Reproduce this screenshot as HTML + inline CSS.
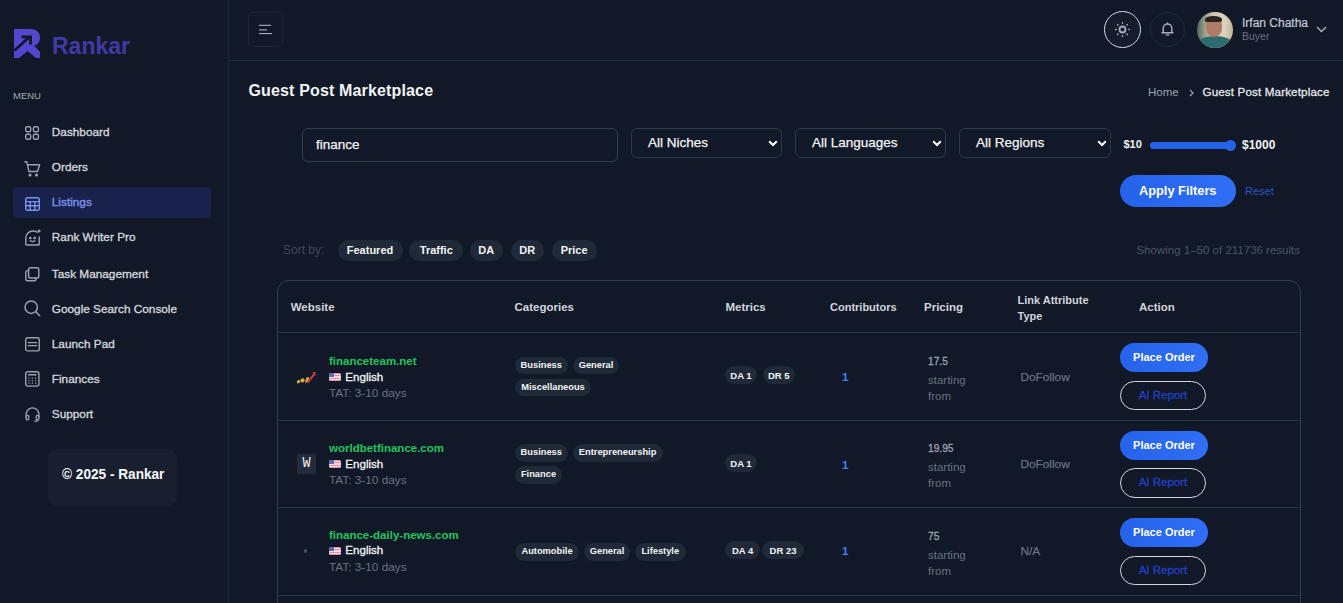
<!DOCTYPE html>
<html><head><meta charset="utf-8">
<style>
*{box-sizing:border-box;margin:0;padding:0}
html,body{width:1343px;height:603px;overflow:hidden;background:#111827;font-family:"Liberation Sans",sans-serif;color:#e5e7eb}
.a{position:absolute;line-height:1;white-space:nowrap}
.b{font-weight:bold}
svg{position:absolute;overflow:visible}
.ln{position:absolute;background:#1f2937}
/* sidebar */
.mt{position:absolute;left:51.8px;font-size:11.8px;font-weight:normal;-webkit-text-stroke:0.35px currentColor;color:#d1d5db;line-height:1;white-space:nowrap}
.ic{fill:none;stroke:#9ca3af;stroke-width:1.4;stroke-linecap:round;stroke-linejoin:round}
.box{position:absolute;border:1px solid #374151;border-radius:6px}
.sel{position:absolute;border:1px solid #2f3847;border-radius:6px;height:30px;top:128px}
.chip{position:absolute;background:#1f2937;border-radius:11px;height:21px;top:239.5px}
.chip span{position:absolute;left:0;right:0;text-align:center;top:5.5px;font-size:11px;font-weight:bold;color:#f3f4f6;line-height:1}
.th{position:absolute;font-size:11.5px;font-weight:bold;color:#d1d5db;line-height:1;white-space:nowrap}
.cat{position:absolute;background:#1f2937;border-radius:9px;height:17.5px}
.cat span{position:absolute;left:0;right:0;text-align:center;top:4.3px;font-size:9.3px;font-weight:bold;color:#f3f4f6;line-height:1;white-space:nowrap}
.met{position:absolute;background:#1f2937;border-radius:9px;height:18px}
.met span{position:absolute;left:0;right:0;text-align:center;top:4.5px;font-size:9.5px;font-weight:bold;color:#f3f4f6;line-height:1;white-space:nowrap}
.dom{position:absolute;left:329px;font-size:11.5px;font-weight:bold;color:#22c55e;line-height:1;white-space:nowrap}
.eng{position:absolute;left:345.3px;font-size:11.6px;-webkit-text-stroke:0.3px currentColor;color:#f3f4f6;line-height:1}
.tat{position:absolute;left:329px;font-size:11.8px;color:#6b7280;line-height:1;white-space:nowrap}
.flag{position:absolute;left:329px;width:12px;height:8px;border-radius:1.5px;overflow:hidden;background:repeating-linear-gradient(#e58fa3 0 1.15px,#f1dde3 1.15px 2.3px)}
.flag:before{content:"";position:absolute;left:0;top:0;width:5px;height:4px;background:#5a6cb0}
.ctr{position:absolute;left:842px;font-size:11.5px;font-weight:bold;color:#3b82f6;line-height:1}
.pr{position:absolute;left:928px;font-size:10.2px;-webkit-text-stroke:0.3px currentColor;color:#9ca3af;line-height:1}
.sf{position:absolute;left:928px;font-size:11.5px;color:#6b7280;line-height:1}
.lk{position:absolute;left:1020.5px;font-size:11.8px;-webkit-text-stroke:0.25px currentColor;color:#6b7280;line-height:1}
.po{position:absolute;left:1120px;width:88px;height:29px;border-radius:15px;background:linear-gradient(90deg,#2563eb,#2f6ef5)}
.po span{position:absolute;left:0;right:0;top:9px;text-align:center;font-size:11px;font-weight:bold;color:#fff;line-height:1}
.ai{position:absolute;left:1120px;width:86px;height:29.5px;border-radius:15px;border:1.7px solid #d3d8df}
.ai span{position:absolute;left:0;right:0;top:8px;text-align:center;font-size:11.5px;-webkit-text-stroke:0.3px currentColor;color:#2541c6;line-height:1}
</style></head><body>

<!-- SIDEBAR -->
<div class="ln" style="left:228px;top:0;width:1px;height:603px"></div>
<svg style="left:14px;top:29px" width="27" height="30" viewBox="0 0 27 30">
  <path d="M0 0 H17 C22.5 0 26 3.6 26 8.5 C26 13 23.5 16 20 16.8 L26 22.8 V29 H22 L13.5 22 L5 29 H0 V0 Z" fill="#5646cf"/>
  <path d="M0.5 21.5 L14.5 8.8 M7.5 7.8 H16.6 V15.5" stroke="#111827" stroke-width="2.8" fill="none" stroke-linejoin="miter"/>
</svg>
<div class="a b" style="left:52px;top:34.5px;font-size:23px;color:#4338a6">Rankar</div>
<div class="a" style="left:13px;top:91px;font-size:9.5px;color:#a3aab5">MENU</div>

<div style="position:absolute;left:13px;top:187px;width:198px;height:31px;border-radius:5px;background:#19224a"></div>

<svg style="left:25px;top:126px" width="15" height="14" viewBox="0 0 15 14" class="ic">
  <rect x="0.7" y="0.7" width="5" height="5" rx="1.5"/><rect x="8.4" y="0.7" width="5" height="5" rx="1.5"/>
  <rect x="0.7" y="8.2" width="5" height="5" rx="1.5"/><rect x="8.4" y="8.2" width="5" height="5" rx="1.5"/>
</svg>
<div class="mt" style="top:127.0px">Dashboard</div>

<svg style="left:24px;top:161px" width="17" height="16" viewBox="0 0 17 16" class="ic">
  <path d="M0.8 0.8 H2.8 L5 10.5 H13.5 L15.6 3.8 H3.6"/><circle cx="6" cy="14" r="0.9" fill="#9ca3af"/><circle cx="12.5" cy="14" r="0.9" fill="#9ca3af"/>
</svg>
<div class="mt" style="top:162.0px">Orders</div>

<svg style="left:25px;top:197px" width="15" height="14" viewBox="0 0 15 14" class="ic" style="stroke:#7c93ef">
  <rect x="0.7" y="0.7" width="13.6" height="12.6" rx="2" style="stroke:#7c93ef"/><path d="M0.7 4.6 H14.3 M0.7 8.8 H14.3 M5.2 4.6 V13.3 M9.8 4.6 V13.3" style="stroke:#7c93ef"/>
</svg>
<div class="mt" style="top:197.0px;color:#7c93ef">Listings</div>

<svg style="left:25px;top:229px" width="16" height="17" viewBox="0 0 16 17" class="ic">
  <path d="M12 3.2 C11 2.4 9.6 2 8 2 C4 2 0.8 5 0.8 9 V15.2 C0.8 15.7 1.2 16 1.7 16 H13.3 C13.8 16 14.2 15.7 14.2 15.2 V8"/>
  <circle cx="14" cy="2" r="0.9" fill="#9ca3af"/><circle cx="5.3" cy="9" r="0.6" fill="#9ca3af"/><circle cx="9.7" cy="9" r="0.6" fill="#9ca3af"/><path d="M5.3 11.6 C6.5 12.9 8.5 12.9 9.7 11.6"/>
</svg>
<div class="mt" style="top:232.0px">Rank Writer Pro</div>

<svg style="left:25px;top:267px" width="15" height="15" viewBox="0 0 15 15" class="ic">
  <rect x="3.6" y="0.8" width="10.2" height="10.2" rx="1.8"/><path d="M3.6 3.6 H2.6 C1.5 3.6 0.8 4.3 0.8 5.4 V12 C0.8 13.1 1.5 13.8 2.6 13.8 H9.2 C10.3 13.8 11 13.1 11 12 V11"/>
</svg>
<div class="mt" style="top:268.5px">Task Management</div>

<svg style="left:24px;top:300px" width="17" height="17" viewBox="0 0 17 17" class="ic">
  <circle cx="7.2" cy="7.2" r="6.2" stroke-width="1.5"/><path d="M11.8 11.8 L15.8 15.8" stroke-width="1.5"/>
</svg>
<div class="mt" style="top:303.5px">Google Search Console</div>

<svg style="left:25px;top:337px" width="15" height="15" viewBox="0 0 15 15" class="ic">
  <rect x="0.7" y="0.7" width="13.6" height="13.2" rx="2"/><path d="M3.3 5.6 H11.7 M3.3 8.6 H11.7"/>
</svg>
<div class="mt" style="top:338.5px">Launch Pad</div>

<svg style="left:25px;top:371px" width="15" height="16" viewBox="0 0 15 16" class="ic">
  <rect x="0.7" y="0.7" width="13.2" height="14.4" rx="2"/><path d="M3.6 3.8 H11"/>
  <g fill="#9ca3af" stroke="none"><circle cx="4" cy="7.2" r="0.7"/><circle cx="7.3" cy="7.2" r="0.7"/><circle cx="10.6" cy="7.2" r="0.7"/><circle cx="4" cy="9.7" r="0.7"/><circle cx="7.3" cy="9.7" r="0.7"/><circle cx="10.6" cy="9.7" r="0.7"/><circle cx="4" cy="12.2" r="0.7"/><circle cx="7.3" cy="12.2" r="0.7"/><circle cx="10.6" cy="12.2" r="0.7"/></g>
</svg>
<div class="mt" style="top:373.5px">Finances</div>

<svg style="left:25px;top:407px" width="15" height="15" viewBox="0 0 16 16" class="ic">
  <path d="M1.2 11 V8 C1.2 4 4.2 1 8 1 C11.8 1 14.8 4 14.8 8 V11"/><rect x="1.2" y="9" width="2.8" height="4.8" rx="1.2"/><rect x="12" y="9" width="2.8" height="4.8" rx="1.2"/><path d="M14 13.8 C14 14.8 12.8 15.2 10.5 15.2"/>
</svg>
<div class="mt" style="top:408.5px">Support</div>

<div style="position:absolute;left:48px;top:449px;width:129px;height:57px;border-radius:10px;background:#182030"></div>
<div class="a b" style="left:61.8px;top:466.8px;font-size:14.2px;transform:scaleX(0.96);transform-origin:0 0;color:#f9fafb">© 2025 - Rankar</div>

<!-- HEADER -->
<div class="ln" style="left:229px;top:60px;width:1114px;height:1px"></div>
<div style="position:absolute;left:248px;top:12px;width:35px;height:35px;border:1px solid #1f2633;border-radius:5px"></div>
<svg style="left:258px;top:24px" width="16" height="12" viewBox="0 0 16 12">
  <path d="M1 1.3 H13 M1 5.9 H9 M1 9.6 H14" stroke="#bcc2cc" stroke-width="1" fill="none"/>
</svg>

<div style="position:absolute;left:1104px;top:11px;width:37px;height:37px;border-radius:50%;border:1.6px solid #d7dbe2;background:#151c2c"></div>
<svg style="left:1114px;top:21px" width="17" height="17" viewBox="0 0 17 17">
  <g stroke="#a7aebb" stroke-width="1.4" fill="none" stroke-linecap="round"><circle cx="8.5" cy="8.5" r="3" stroke-width="1.8"/>
  <path d="M8.5 1.6 V2.2 M8.5 14.8 V15.4 M1.6 8.5 H2.2 M14.8 8.5 H15.4 M3.6 3.6 L4 4 M13 13 L13.4 13.4 M3.6 13.4 L4 13 M13 4 L13.4 3.6"/></g>
</svg>
<div style="position:absolute;left:1150px;top:12px;width:35px;height:35px;border-radius:50%;border:1px solid #1f2937"></div>
<svg style="left:1161px;top:22px" width="13" height="14" viewBox="0 0 13 14">
  <path d="M2.2 10.6 V6.5 C2.2 3.9 4.1 2 6.5 2 C8.9 2 10.8 3.9 10.8 6.5 V10.6 M1 10.8 H12 M5.2 12.9 H7.8 M6.5 0.9 V1.8" stroke="#aab1bd" stroke-width="1.4" fill="none" stroke-linecap="round"/>
</svg>

<div style="position:absolute;left:1197px;top:12px;width:36px;height:36px;border-radius:50%;overflow:hidden;background:linear-gradient(90deg,#56665a 0%,#98a08e 22%,#cfc8b4 45%,#ddd3bd 75%,#c4b497 100%)">
  <div style="position:absolute;left:-2px;top:24px;width:40px;height:20px;border-radius:50% 50% 0 0;background:#2e6b6f"></div>
  <div style="position:absolute;left:8.5px;top:6px;width:16px;height:19px;border-radius:42% 42% 48% 48%;background:#b07c6a"></div>
  <div style="position:absolute;left:8px;top:4px;width:17px;height:6px;border-radius:50% 50% 20% 20%;background:#2b2420"></div>
</div>
<div class="a" style="left:1242px;top:16.6px;font-size:12px;-webkit-text-stroke:0.2px currentColor;color:#c3cad5">Irfan Chatha</div>
<div class="a" style="left:1242px;top:30.8px;font-size:10.5px;color:#6b7280">Buyer</div>
<svg style="left:1316px;top:26px" width="11" height="7" viewBox="0 0 11 7">
  <path d="M1 1 L5.5 5.5 L10 1" stroke="#aeb4bf" stroke-width="1.4" fill="none"/>
</svg>

<!-- TITLE -->
<div class="a b" style="left:248.5px;top:83.3px;font-size:16px;letter-spacing:0.15px;color:#f3f4f6">Guest Post Marketplace</div>
<div class="a" style="left:1148px;top:86.5px;font-size:11.5px;color:#9ca3af">Home</div>
<svg style="left:1188.5px;top:88.5px" width="6" height="8" viewBox="0 0 6 8"><path d="M1 1 L4 4 L1 7" stroke="#9ca3af" stroke-width="1.2" fill="none"/></svg>
<div class="a" style="left:1202.5px;top:86px;font-size:11.6px;-webkit-text-stroke:0.3px currentColor;color:#e5e7eb;letter-spacing:0.15px">Guest Post Marketplace</div>

<!-- FILTERS -->
<div class="box" style="left:302px;top:128px;width:316px;height:33.5px;border-color:#343d4c"></div>
<div class="a" style="left:316px;top:137.6px;font-size:13.5px;-webkit-text-stroke:0.25px currentColor;color:#f3f4f6">finance</div>

<div class="sel" style="left:631px;width:151px"></div>
<div class="a" style="left:648px;top:135.6px;font-size:13.5px;-webkit-text-stroke:0.25px currentColor;color:#f3f4f6">All Niches</div>
<div class="sel" style="left:795px;width:151px"></div>
<div class="a" style="left:812px;top:135.6px;font-size:13.5px;-webkit-text-stroke:0.25px currentColor;color:#f3f4f6">All Languages</div>
<div class="sel" style="left:959px;width:152px"></div>
<div class="a" style="left:976px;top:135.6px;font-size:13.5px;-webkit-text-stroke:0.25px currentColor;color:#f3f4f6">All Regions</div>
<svg style="left:768px;top:140px" width="10" height="7" viewBox="0 0 10 7"><path d="M1.2 1.2 L5 5 L8.8 1.2" stroke="#fff" stroke-width="2" fill="none"/></svg>
<svg style="left:932px;top:140px" width="10" height="7" viewBox="0 0 10 7"><path d="M1.2 1.2 L5 5 L8.8 1.2" stroke="#fff" stroke-width="2" fill="none"/></svg>
<svg style="left:1097px;top:140px" width="10" height="7" viewBox="0 0 10 7"><path d="M1.2 1.2 L5 5 L8.8 1.2" stroke="#fff" stroke-width="2" fill="none"/></svg>

<div class="a b" style="left:1123.4px;top:139.4px;font-size:11px;color:#f3f4f6">$10</div>
<div style="position:absolute;left:1149.5px;top:141.5px;width:85px;height:7px;border-radius:4px;background:#2563eb"></div>
<div style="position:absolute;left:1224.5px;top:139.5px;width:11px;height:11px;border-radius:50%;background:#2563eb"></div>
<div class="a b" style="left:1242px;top:138.7px;font-size:12px;color:#f3f4f6">$1000</div>

<div style="position:absolute;left:1120px;top:175px;width:115.5px;height:32px;border-radius:16px;background:linear-gradient(90deg,#2563eb,#2f6ef5)"></div>
<div class="a b" style="left:1120px;width:115.5px;text-align:center;top:184.8px;font-size:12.8px;color:#fff">Apply Filters</div>
<div class="a" style="left:1245px;top:185.8px;font-size:11px;color:#2a55c8">Reset</div>

<!-- SORT -->
<div class="a" style="left:283px;top:244.4px;font-size:12px;color:#414958">Sort by:</div>
<div class="chip" style="left:337.5px;width:65px"><span>Featured</span></div>
<div class="chip" style="left:409.3px;width:54px"><span>Traffic</span></div>
<div class="chip" style="left:469.5px;width:33.5px"><span>DA</span></div>
<div class="chip" style="left:510.8px;width:33px"><span>DR</span></div>
<div class="chip" style="left:551.6px;width:45px"><span>Price</span></div>
<div class="a" style="left:1100px;width:200px;text-align:right;top:244.7px;font-size:11.5px;color:#4b5563">Showing 1–50 of 211736 results</div>

<!-- TABLE -->
<div style="position:absolute;left:277px;top:280px;width:1024px;height:360px;border:1px solid #343d4d;border-radius:12px"></div>
<div class="th" style="left:290.7px;top:302.3px">Website</div>
<div class="th" style="left:514.5px;top:302.3px">Categories</div>
<div class="th" style="left:725.5px;top:302.3px">Metrics</div>
<div class="th" style="left:830px;top:302.3px;font-size:11px">Contributors</div>
<div class="th" style="left:924px;top:302.3px">Pricing</div>
<div class="th" style="left:1017.5px;top:294.7px;font-size:11px">Link Attribute</div>
<div class="th" style="left:1017.5px;top:310.8px;font-size:11px">Type</div>
<div class="th" style="left:1139px;top:302.3px">Action</div>

<div class="ln" style="left:278px;top:332px;width:1022px;height:1px;background:#2a3342"></div>
<div class="ln" style="left:278px;top:419.5px;width:1022px;height:1px;background:#2a3342"></div>
<div class="ln" style="left:278px;top:507px;width:1022px;height:1px;background:#2a3342"></div>
<div class="ln" style="left:278px;top:594.5px;width:1022px;height:1px;background:#2a3342"></div>

<!-- ROW 1 -->
<svg style="left:296px;top:371px" width="21" height="13" viewBox="0 0 21 13">
  <g fill="#dcae45"><ellipse cx="2.6" cy="10.6" rx="1.9" ry="1.5" transform="rotate(-25 2.6 10.6)"/><ellipse cx="6.6" cy="9.4" rx="2.1" ry="2" transform="rotate(-25 6.6 9.4)"/><path d="M9 11.5 L10.5 6.5 L13 6 L12.2 11.2 Z"/></g>
  <path d="M11.5 11.5 L18.5 3" stroke="#c93a44" stroke-width="2" fill="none"/><path d="M16 1.5 L19.5 1 L19.6 4.5 Z" fill="#c93a44"/>
</svg>
<div class="dom" style="top:356.4px">financeteam.net</div>
<div class="flag" style="top:373px"></div>
<div class="eng" style="top:370.8px">English</div>
<div class="tat" style="top:388.0px">TAT: 3-10 days</div>
<div class="cat" style="left:515px;top:356.5px;width:52.5px"><span>Business</span></div>
<div class="cat" style="left:573px;top:356.5px;width:46px"><span>General</span></div>
<div class="cat" style="left:515px;top:378.5px;width:76px"><span>Miscellaneous</span></div>
<div class="met" style="left:725px;top:366.3px;width:32px"><span>DA 1</span></div>
<div class="met" style="left:762.5px;top:366.3px;width:32.5px"><span>DR 5</span></div>
<div class="ctr" style="top:372px">1</div>
<div class="pr" style="top:356.5px">17.5</div>
<div class="sf" style="top:374.8px">starting</div>
<div class="sf" style="top:390.9px">from</div>
<div class="lk" style="top:371.6px">DoFollow</div>
<div class="po" style="top:343px"><span>Place Order</span></div>
<div class="ai" style="top:380.8px"><span>AI Report</span></div>

<!-- ROW 2 -->
<div style="position:absolute;left:296.5px;top:453.5px;width:19px;height:20px;border-radius:2px;background:#252b3a"></div>
<div class="a" style="left:296.5px;width:19px;text-align:center;top:456.3px;font-size:15px;font-family:'Liberation Mono',monospace;color:#eef0f3;transform:scaleX(0.9)">W</div>
<div class="dom" style="top:442.9px">worldbetfinance.com</div>
<div class="flag" style="top:460px"></div>
<div class="eng" style="top:457.8px">English</div>
<div class="tat" style="top:474.5px">TAT: 3-10 days</div>
<div class="cat" style="left:515px;top:444px;width:52.5px"><span>Business</span></div>
<div class="cat" style="left:572.6px;top:444px;width:90px"><span>Entrepreneurship</span></div>
<div class="cat" style="left:515px;top:466px;width:47px"><span>Finance</span></div>
<div class="met" style="left:725px;top:454.3px;width:32px"><span>DA 1</span></div>
<div class="ctr" style="top:459.5px">1</div>
<div class="pr" style="top:444px">19.95</div>
<div class="sf" style="top:462.3px">starting</div>
<div class="sf" style="top:478.4px">from</div>
<div class="lk" style="top:459.1px">DoFollow</div>
<div class="po" style="top:430.5px"><span>Place Order</span></div>
<div class="ai" style="top:468.3px"><span>AI Report</span></div>

<!-- ROW 3 -->
<div style="position:absolute;left:303.5px;top:549px;width:3px;height:4px;border-radius:50%;background:#4b5563"></div>
<div class="dom" style="top:529.9px">finance-daily-news.com</div>
<div class="flag" style="top:546.5px"></div>
<div class="eng" style="top:544.3px">English</div>
<div class="tat" style="top:562px">TAT: 3-10 days</div>
<div class="cat" style="left:515px;top:543px;width:64px"><span>Automobile</span></div>
<div class="cat" style="left:583.8px;top:543px;width:46.5px"><span>General</span></div>
<div class="cat" style="left:635px;top:543px;width:50.5px"><span>Lifestyle</span></div>
<div class="met" style="left:725.4px;top:541px;width:34.5px"><span>DA 4</span></div>
<div class="met" style="left:762.3px;top:541px;width:41.5px"><span>DR 23</span></div>
<div class="ctr" style="top:546.3px">1</div>
<div class="pr" style="top:531.5px">75</div>
<div class="sf" style="top:549.8px">starting</div>
<div class="sf" style="top:565.9px">from</div>
<div class="lk" style="top:545.6px">N/A</div>
<div class="po" style="top:518px"><span>Place Order</span></div>
<div class="ai" style="top:555.8px"><span>AI Report</span></div>

</body></html>
